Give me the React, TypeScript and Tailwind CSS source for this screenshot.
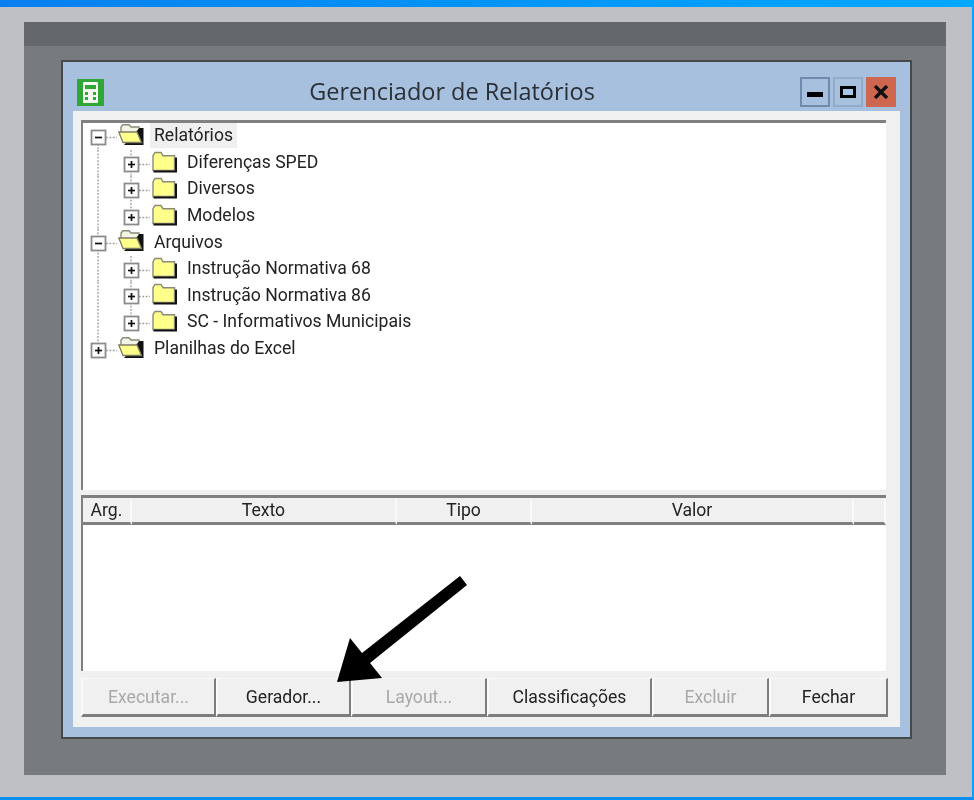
import React from "react";

function Closed() {
  return (
    <g>
      <path d="M1 4.2 L3 1 H9 L11 4.2 H22.5 V19 H1 Z" fill="#ffff8c" stroke="#8a8a78" strokeWidth="1.4" />
      <path d="M1.5 20 H24 V6" fill="none" stroke="#111" strokeWidth="2" />
    </g>
  );
}

function Opened() {
  return (
    <g>
      <path d="M3 8 V3 L5 0.8 H11 L13 3 H21 V8" fill="#f4f4e6" stroke="#8a8a78" strokeWidth="1.4" />
      <path d="M21.5 4 H25.5 V21 H6 Z" fill="#111" />
      <path d="M0.8 8 H19 L23.5 18.5 H5 Z" fill="#ffff8c" stroke="#7d7d66" strokeWidth="1.3" />
    </g>
  );
}

function Node({ cx, plus }: { cx: number; plus: boolean }) {
  return (
    <g>
      <rect x={cx - 6.5} y="7.5" width="14" height="14" fill="#fff" stroke="#8b8b8b" strokeWidth="1.8" />
      <path d={`M${cx - 3} 14.5 H${cx + 4}`} stroke="#111" strokeWidth="1.7" />
      {plus && <path d={`M${cx + 0.5} 11 V18`} stroke="#111" strokeWidth="1.7" />}
    </g>
  );
}

type RowData = {
  label: string;
  level: 0 | 1;
  open?: boolean;
  collapsed?: boolean;
  selected?: boolean;
  spine?: "down" | "full" | "up";
  last?: boolean;
};

const rows: RowData[] = [
  { label: "Relatórios", level: 0, open: true, selected: true, spine: "down" },
  { label: "Diferenças SPED", level: 1, spine: "full", collapsed: true },
  { label: "Diversos", level: 1, spine: "full", collapsed: true },
  { label: "Modelos", level: 1, spine: "full", last: true, collapsed: true },
  { label: "Arquivos", level: 0, open: true, spine: "full" },
  { label: "Instrução Normativa 68", level: 1, spine: "full", collapsed: true },
  { label: "Instrução Normativa 86", level: 1, spine: "full", collapsed: true },
  { label: "SC - Informativos Municipais", level: 1, spine: "full", last: true, collapsed: true },
  { label: "Planilhas do Excel", level: 0, open: true, spine: "up", collapsed: true },
];

function TreeRow({ r }: { r: RowData }) {
  const w = r.level === 0 ? 67 : 100;
  const nx = r.level === 0 ? 15 : 48;
  const dotted = { stroke: "#9a9a9a", strokeWidth: 1.4, strokeDasharray: "1.8 1.6", fill: "none" };
  return (
    <div className="flex h-[26.57px] items-start">
      <svg width={w} height="26.57" viewBox={`0 0 ${w} 26.57`} className="shrink-0 overflow-visible">
        {r.spine === "down" && <path d="M15 21 V27" {...dotted} />}
        {r.spine === "full" && <path d="M15 0 V27" {...dotted} />}
        {r.spine === "up" && <path d="M15 0 V8" {...dotted} />}
        {r.level === 1 && <path d={r.last ? "M48 0 V8" : "M48 0 V27"} {...dotted} />}
        <path d={`M${nx + 8} 14.5 H${nx + 19}`} {...dotted} />
        <Node cx={nx} plus={!!r.collapsed} />
        <g transform={r.open ? "translate(35 1)" : "translate(69 1.5)"}>{r.open ? <Opened /> : <Closed />}</g>
      </svg>
      <span
        className={
          r.selected
            ? "flex h-[25px] items-center bg-[#efefef] px-[4px] text-[17.6px] text-[#222]"
            : "flex h-[25px] items-center px-[4px] text-[17.6px] text-[#222]"
        }
      >
        {r.label}
      </span>
    </div>
  );
}

function Btn({ label, width, disabled }: { label: string; width: string; disabled?: boolean }) {
  return (
    <button
      className={[
        "flex h-[39px] items-center justify-center border-b-[3px] border-b-[#7d7d7d] bg-[#f0f0f0] pt-[2px] text-[17.6px]",
        "border-r-[2px] border-r-[#7d7d7d] border-l-[2px] border-l-[#fafafa] border-t-[1px] border-t-[#f8f8f8]",
        width,
        disabled ? "text-[#a8a8a8]" : "text-[#222]",
      ].join(" ")}
    >
      {label}
    </button>
  );
}

const cols = [
  { label: "Arg.", w: "w-[49px]" },
  { label: "Texto", w: "w-[265px]" },
  { label: "Tipo", w: "w-[135px]" },
  { label: "Valor", w: "w-[322px]" },
  { label: "", w: "flex-1" },
];

export default function App() {
  return (
    <div
      className="relative flex h-[800px] w-[974px] flex-col overflow-hidden bg-[#bfc0c5] blur-[0.5px]"
      style={{ fontFamily: 'Roboto, "Liberation Sans", sans-serif' }}
    >
      <div className="h-[7px] shrink-0 bg-gradient-to-r from-[#0a80f0] to-[#00a8ff]" />
      <div className="flex min-h-0 flex-1 border-r-[2px] border-r-[#0aa0f8] pt-[15px] pr-[26px] pb-[22px] pl-[24px]">
        <div className="flex flex-1 flex-col bg-[#787b7e]">
          <div className="h-[24px] shrink-0 bg-[#65686b]" />
          <div className="flex min-h-0 flex-1 pt-[14px] pr-[34px] pb-[36px] pl-[37px]">
            <div className="flex flex-1 flex-col border-2 border-[#46494c] bg-[#a6c0de]">
              <div className="flex h-[49px] shrink-0 items-center pt-[11px] pr-[14px] pl-[14px]">
                <svg width="27" height="27" viewBox="0 0 27 27" className="shrink-0">
                  <rect width="27" height="27" fill="#2fa636" />
                  <rect x="6" y="3" width="15" height="21" rx="1" fill="#f4f8f0" />
                  <rect x="8" y="6" width="11" height="4" fill="#2fa636" />
                  {[13, 18].map((y) =>
                    [8, 16].map((x) => <rect key={`${x}${y}`} x={x} y={y} width="3" height="3" fill="#2fa636" />),
                  )}
                </svg>
                <div
                  className="flex-1 text-center text-[23.5px] leading-none text-[#2b2f36]"
                  style={{ fontFamily: '"Open Sans", "Noto Sans", sans-serif' }}
                >
                  Gerenciador de Relatórios
                </div>
                <div className="flex gap-[3px]">
                  <div className="flex h-[30px] w-[30px] items-center justify-center border-2 border-[#6f8aae] bg-[#a6c0de]">
                    <svg width="16" height="16" viewBox="0 0 16 16">
                      <rect x="0" y="8" width="16" height="5" fill="#000" />
                    </svg>
                  </div>
                  <div className="flex h-[30px] w-[30px] items-center justify-center border-2 border-[#92abcb] bg-[#a6c0de]">
                    <svg width="16" height="12" viewBox="0 0 16 12">
                      <rect x="1.5" y="1.5" width="13" height="9" fill="#a6c8e8" stroke="#000" strokeWidth="3" />
                    </svg>
                  </div>
                  <div className="flex h-[30px] w-[30px] items-center justify-center border border-[#c96a56] bg-[#cf6650]">
                    <svg width="16" height="14" viewBox="0 0 16 14">
                      <path d="M2 1 L14 13 M14 1 L2 13" stroke="#111" strokeWidth="3.4" />
                    </svg>
                  </div>
                </div>
              </div>
              <div className="mr-[10px] mb-[10px] ml-[10px] flex min-h-0 flex-1 flex-col bg-[#f0f0f0] pt-[9px] pr-[3px] pb-[9px] pl-[8px]">
                <div className="mr-[11px] h-[370px] shrink-0 border-t-[3px] border-l-[2px] border-t-[#808080] border-l-[#808080] bg-white">
                  {rows.map((r) => (
                    <TreeRow key={r.label} r={r} />
                  ))}
                </div>
                <div className="mt-[5px] mr-[11px] flex h-[176px] shrink-0 flex-col border-t-[3px] border-l-[2px] border-t-[#808080] border-l-[#808080] bg-white">
                  <div className="flex h-[27px] shrink-0 bg-[#f0f0f0]">
                    {cols.map((c, i) => (
                      <div
                        key={i}
                        className={`flex items-center justify-center border-r-[2px] border-b-[3px] border-r-[#fafafa] border-b-[#808080] text-[17.6px] text-[#222] ${c.w}`}
                      >
                        {c.label}
                      </div>
                    ))}
                  </div>
                </div>
                <div className="mt-[7px] flex shrink-0">
                  <Btn label="Executar..." width="w-[135px]" disabled />
                  <Btn label="Gerador..." width="w-[135px]" />
                  <Btn label="Layout..." width="w-[136px]" disabled />
                  <Btn label="Classificações" width="w-[165px]" />
                  <Btn label="Excluir" width="w-[117px]" disabled />
                  <Btn label="Fechar" width="w-[119px]" />
                </div>
              </div>
            </div>
          </div>
        </div>
      </div>
      <div className="h-[3px] shrink-0 bg-[#0a90f4]" />
      <svg className="pointer-events-none absolute top-0 left-0" width="974" height="800" viewBox="0 0 974 800">
        <polygon points="337,682 350,638 362,653 460,576 467,585 370,663 382,678" fill="#000" />
      </svg>
    </div>
  );
}
